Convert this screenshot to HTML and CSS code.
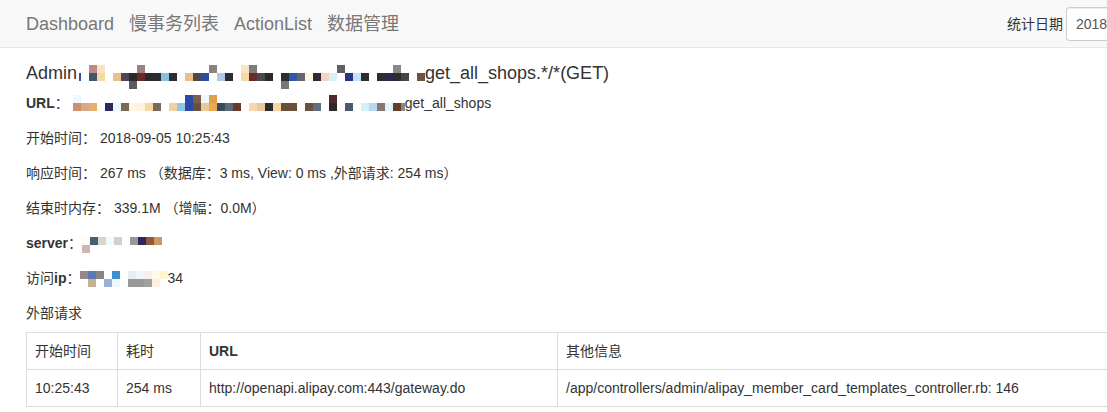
FILE: index.html
```html
<!DOCTYPE html>
<html lang="zh-CN">
<head>
<meta charset="utf-8">
<title>Admin get_all_shops</title>
<link rel="stylesheet" href="styles.css">
</head>
<body>
<nav class="navbar">
  <div class="nav-links">
    <a class="nav-link" href="#">Dashboard</a>
    <a class="nav-link" href="#">慢事务列表</a>
    <a class="nav-link" href="#">ActionList</a>
    <a class="nav-link" href="#">数据管理</a>
  </div>
  <form class="date-form">
    <label class="date-label">统计日期</label>
    <input class="date-input" type="text" value="2018-09-05">
  </form>
</nav>
<main class="content">
  <h4 class="title">Admin<svg class="mosaic mosaic-title" width="348" height="24" viewBox="0 0 348 24" shape-rendering="crispEdges">
    <rect x="2" y="8" width="2" height="8" fill="#2a4fa0"/>
    <rect x="12" y="0" width="8" height="8" fill="#c08a85"/><rect x="12" y="8" width="8" height="8" fill="#3d5a6b"/>
    <rect x="20" y="0" width="8" height="8" fill="#fae3c5"/><rect x="20" y="8" width="8" height="8" fill="#f8d9a2"/>
    <rect x="36" y="8" width="8" height="8" fill="#ebc08a"/>
    <rect x="44" y="8" width="8" height="8" fill="#4a4850"/>
    <rect x="52" y="8" width="8" height="8" fill="#2b2b2b"/><rect x="52" y="16" width="8" height="8" fill="#5a5a62"/>
    <rect x="60" y="0" width="8" height="8" fill="#9a8080"/><rect x="60" y="8" width="8" height="8" fill="#6b2a2a"/>
    <rect x="68" y="8" width="8" height="8" fill="#2a2a2a"/>
    <rect x="76" y="8" width="8" height="8" fill="#2d2d2d"/>
    <rect x="84" y="8" width="8" height="8" fill="#86c0e8"/>
    <rect x="92" y="8" width="8" height="8" fill="#2e2e2e"/>
    <rect x="100" y="8" width="8" height="8" fill="#f6fcff"/>
    <rect x="108" y="8" width="8" height="8" fill="#eabf88"/>
    <rect x="116" y="8" width="8" height="8" fill="#4a4a4a"/>
    <rect x="124" y="8" width="8" height="8" fill="#2b4fa0"/>
    <rect x="132" y="0" width="8" height="8" fill="#8a847c"/>
    <rect x="140" y="8" width="8" height="8" fill="#acc9e8"/>
    <rect x="148" y="8" width="8" height="8" fill="#2c2c2c"/>
    <rect x="164" y="0" width="8" height="8" fill="#fae3c5"/><rect x="164" y="8" width="8" height="8" fill="#f7d9a3"/>
    <rect x="172" y="0" width="8" height="8" fill="#7c7c7c"/><rect x="172" y="8" width="8" height="8" fill="#6b2a2a"/>
    <rect x="180" y="8" width="8" height="8" fill="#4a4a4a"/>
    <rect x="188" y="8" width="8" height="8" fill="#2b2b2b"/>
    <rect x="204" y="8" width="8" height="8" fill="#2e2e2e"/><rect x="204" y="16" width="8" height="8" fill="#777777"/>
    <rect x="212" y="8" width="8" height="8" fill="#2b58a8"/>
    <rect x="220" y="8" width="8" height="8" fill="#6a6470"/>
    <rect x="228" y="8" width="8" height="8" fill="#fdf6dc"/>
    <rect x="236" y="8" width="8" height="8" fill="#2a2a38"/>
    <rect x="244" y="8" width="8" height="8" fill="#f2d6c0"/>
    <rect x="252" y="8" width="8" height="8" fill="#d9f0fb"/>
    <rect x="260" y="0" width="8" height="8" fill="#5e5e66"/>
    <rect x="268" y="8" width="8" height="8" fill="#2b3585"/>
    <rect x="276" y="8" width="8" height="8" fill="#c0e3f8"/>
    <rect x="284" y="8" width="8" height="8" fill="#2d2d2d"/>
    <rect x="300" y="8" width="8" height="8" fill="#2d2d2d"/>
    <rect x="308" y="8" width="8" height="8" fill="#2a2a4a"/>
    <rect x="316" y="0" width="8" height="8" fill="#8a8a8a"/><rect x="316" y="8" width="8" height="8" fill="#2d2d2d"/>
    <rect x="324" y="8" width="8" height="8" fill="#444840"/>
    <rect x="340" y="8" width="8" height="8" fill="#6b5545"/>
  </svg>get_all_shops.*/*(GET)</h4>

  <p class="info"><b>URL</b>：<svg class="mosaic mosaic-url" width="336" height="16" viewBox="0 0 336 16" shape-rendering="crispEdges">
    <rect x="4" y="0" width="8" height="8" fill="#eef8ff"/>
    <rect x="116" y="0" width="8" height="8" fill="#2a4aa8"/>
    <rect x="124" y="0" width="8" height="8" fill="#7a6048"/>
    <rect x="132" y="0" width="8" height="8" fill="#eef8fc"/>
    <rect x="140" y="0" width="8" height="8" fill="#e0a048"/>
    <rect x="260" y="0" width="8" height="8" fill="#502a28"/>
    <rect x="4" y="8" width="8" height="8" fill="#cc9070"/>
    <rect x="12" y="8" width="8" height="8" fill="#d8a88a"/>
    <rect x="20" y="8" width="8" height="8" fill="#e6b06a"/>
    <rect x="36" y="8" width="8" height="8" fill="#2c2c5c"/>
    <rect x="44" y="8" width="8" height="8" fill="#eef8fc"/>
    <rect x="52" y="8" width="8" height="8" fill="#7a6a50"/>
    <rect x="60" y="8" width="8" height="8" fill="#fef6e4"/>
    <rect x="68" y="8" width="8" height="8" fill="#fdf3dc"/>
    <rect x="76" y="8" width="8" height="8" fill="#f5d8a0"/>
    <rect x="84" y="8" width="8" height="8" fill="#7a6a5c"/>
    <rect x="100" y="8" width="8" height="8" fill="#f2d0a0"/>
    <rect x="108" y="8" width="8" height="8" fill="#8cc4ea"/>
    <rect x="116" y="8" width="8" height="8" fill="#2a4aa8"/>
    <rect x="124" y="8" width="8" height="8" fill="#6a5040"/>
    <rect x="132" y="8" width="8" height="8" fill="#ecc890"/>
    <rect x="140" y="8" width="8" height="8" fill="#e8a858"/>
    <rect x="148" y="8" width="8" height="8" fill="#3a4a5a"/>
    <rect x="156" y="8" width="8" height="8" fill="#5a6a78"/>
    <rect x="164" y="8" width="8" height="8" fill="#6a3a28"/>
    <rect x="180" y="8" width="8" height="8" fill="#f8d8a8"/>
    <rect x="188" y="8" width="8" height="8" fill="#ecc8a0"/>
    <rect x="196" y="8" width="8" height="8" fill="#2c2c2c"/>
    <rect x="204" y="8" width="8" height="8" fill="#f5d8a0"/>
    <rect x="212" y="8" width="8" height="8" fill="#6a5038"/>
    <rect x="220" y="8" width="8" height="8" fill="#6a5038"/>
    <rect x="236" y="8" width="8" height="8" fill="#6a5040"/>
    <rect x="244" y="8" width="8" height="8" fill="#607080"/>
    <rect x="260" y="8" width="8" height="8" fill="#2a2a2a"/>
    <rect x="276" y="8" width="8" height="8" fill="#4a5a6a"/>
    <rect x="292" y="8" width="8" height="8" fill="#d2f0fa"/>
    <rect x="300" y="8" width="8" height="8" fill="#b8d8ee"/>
    <rect x="308" y="8" width="8" height="8" fill="#847870"/>
    <rect x="316" y="8" width="8" height="8" fill="#dff4f8"/>
    <rect x="324" y="8" width="8" height="8" fill="#6a3a28"/>
    <rect x="332" y="8" width="4" height="8" fill="#888888"/>
  </svg>get_all_shops</p>

  <p class="info">开始时间： 2018-09-05 10:25:43</p>
  <p class="info">响应时间： 267 ms （数据库：3 ms, View: 0 ms ,外部请求: 254 ms）</p>
  <p class="info">结束时内存： 339.1M （增幅：0.0M）</p>

  <p class="info"><b>server</b>：<svg class="mosaic mosaic-server" width="80" height="16" viewBox="0 0 80 16" shape-rendering="crispEdges">
    <rect x="0" y="0" width="8" height="8" fill="#fefcf0"/>
    <rect x="8" y="0" width="8" height="8" fill="#456070"/>
    <rect x="16" y="0" width="8" height="8" fill="#d8d6d0"/>
    <rect x="24" y="0" width="8" height="8" fill="#eefcff"/>
    <rect x="32" y="0" width="8" height="8" fill="#d8cccc"/>
    <rect x="48" y="0" width="8" height="8" fill="#989898"/>
    <rect x="56" y="0" width="8" height="8" fill="#2a2a58"/>
    <rect x="64" y="0" width="8" height="8" fill="#905a38"/>
    <rect x="72" y="0" width="8" height="8" fill="#d09860"/>
    <rect x="0" y="8" width="8" height="8" fill="#d0b4b4"/>
  </svg></p>

  <p class="info">访问<b>ip</b>：<svg class="mosaic mosaic-ip" width="88" height="16" viewBox="0 0 88 16" shape-rendering="crispEdges">
    <rect x="0" y="0" width="8" height="8" fill="#968888"/>
    <rect x="8" y="0" width="8" height="8" fill="#5a7ab0"/>
    <rect x="16" y="0" width="8" height="8" fill="#888480"/>
    <rect x="32" y="0" width="8" height="8" fill="#4090d0"/>
    <rect x="48" y="0" width="8" height="8" fill="#e4f0f8"/>
    <rect x="56" y="0" width="8" height="8" fill="#eef6fa"/>
    <rect x="64" y="0" width="8" height="8" fill="#f4f0f0"/>
    <rect x="72" y="0" width="8" height="8" fill="#fefae8"/>
    <rect x="80" y="0" width="8" height="8" fill="#fff4d0"/>
    <rect x="8" y="8" width="8" height="8" fill="#c8b098"/>
    <rect x="24" y="8" width="8" height="8" fill="#98b0d8"/>
    <rect x="32" y="8" width="8" height="8" fill="#eef8ff"/>
    <rect x="48" y="8" width="8" height="8" fill="#989898"/>
    <rect x="56" y="8" width="8" height="8" fill="#989898"/>
    <rect x="64" y="8" width="8" height="8" fill="#a0a0a0"/>
    <rect x="72" y="8" width="8" height="8" fill="#fdf0e0"/>
  </svg><span class="ip-tail">34</span></p>

  <p class="info info-last">外部请求</p>

  <table class="req-table">
    <colgroup>
      <col class="col-start">
      <col class="col-cost">
      <col class="col-url">
      <col class="col-other">
    </colgroup>
    <thead>
      <tr>
        <th><span class="th-cjk">开始时间</span></th>
        <th><span class="th-cjk">耗时</span></th>
        <th>URL</th>
        <th class="cell-last"><span class="th-cjk">其他信息</span></th>
      </tr>
    </thead>
    <tbody>
      <tr>
        <td>10:25:43</td>
        <td>254 ms</td>
        <td>http://openapi.alipay.com:443/gateway.do</td>
        <td class="cell-last">/app/controllers/admin/alipay_member_card_templates_controller.rb: 146</td>
      </tr>
    </tbody>
  </table>
</main>
</body>
</html>
```
FILE: styles.css
```css
html, body {
  margin: 0;
  padding: 0;
  overflow: hidden;
}

body {
  font-family: "Liberation Sans", "Noto Sans CJK SC", sans-serif;
  font-size: 14px;
  line-height: 20px;
  color: #333;
  background: #fff;
}

.navbar {
  display: flex;
  align-items: center;
  height: 47px;
  padding-left: 26px;
  background: #f8f8f8;
  border-bottom: 1px solid #e7e7e7;
}

.nav-links {
  display: flex;
  gap: 15px;
}

.nav-link {
  font-size: 18px;
  line-height: 20px;
  color: #777;
  text-decoration: none;
}

.date-form {
  display: flex;
  align-items: center;
  gap: 3px;
  margin: 0 0 0 auto;
}

.date-label {
  font-size: 14px;
  color: #333;
}

.date-input {
  box-sizing: border-box;
  width: 41px;
  height: 34px;
  padding: 6px 0 6px 9px;
  border: 1px solid #ccc;
  border-right: 0;
  border-radius: 4px 0 0 4px;
  background: #fff;
  box-shadow: inset 0 1px 1px rgba(0, 0, 0, 0.075);
  font-family: "Liberation Sans", sans-serif;
  font-size: 14px;
  color: #555;
}

.content {
  padding: 13px 0 0 26px;
}

.title {
  margin: 0 0 7px;
  font-size: 18px;
  line-height: 24px;
  font-weight: 500;
  white-space: nowrap;
}

.mosaic {
  display: inline-block;
}

.mosaic-title {
  vertical-align: -7px;
  margin-bottom: -3px;
}

.mosaic-url {
  vertical-align: -3px;
}

.mosaic-server {
  vertical-align: -5px;
}

.mosaic-ip {
  vertical-align: -4px;
}

.ip-tail {
  margin-left: -1px;
}

.info {
  margin: 0 0 15px;
  white-space: nowrap;
}

.info-last {
  margin-bottom: 9px;
}

.req-table {
  border-collapse: collapse;
  table-layout: fixed;
  width: 100%;
}

.col-start { width: 91px; }
.col-cost { width: 83px; }
.col-url { width: 357px; }
.col-other { width: auto; }

.req-table th,
.req-table td {
  border: 1px solid #ddd;
  padding: 8px;
  line-height: 20px;
  text-align: left;
  white-space: nowrap;
  overflow: hidden;
  vertical-align: top;
}

.req-table .cell-last {
  border-right: 0;
}

.req-table th {
  font-weight: bold;
}

.th-cjk {
  font-weight: normal;
}
```
